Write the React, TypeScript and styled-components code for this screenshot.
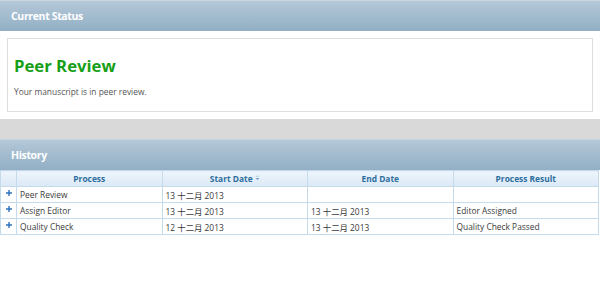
import React from "react";
import styled, { createGlobalStyle } from "styled-components";

const Global = createGlobalStyle`
  html, body { margin: 0; padding: 0; background: #fff; }
  body { font-family: "Open Sans", "Noto Sans CJK SC", sans-serif; }
`;

const Page = styled.div`
  width: 600px;
  display: flex;
  flex-direction: column;
`;

const SectionHeader = styled.div`
  height: 31px;
  box-sizing: border-box;
  border-top: 1px solid #c9d5df;
  background: linear-gradient(#b4c8d8, #92afc5);
  color: #fff;
  font-weight: 700;
  font-size: 10.5px;
  letter-spacing: -0.35px;
  display: flex;
  align-items: center;
  padding-left: 11px;
`;

const StatusBody = styled.div`
  padding: 7px;
  background: #fff;
`;

const StatusBox = styled.div`
  border: 1px solid #dedede;
  height: 74px;
  box-sizing: border-box;
  padding: 8px 6px;
`;

const StatusTitle = styled.div`
  color: #17a017;
  font-weight: 700;
  font-size: 16.7px;
  margin-top: 7px;
`;

const StatusText = styled.div`
  color: #555;
  font-size: 8.4px;
  margin-top: 9px;
`;

const Gap = styled.div`
  height: 20px;
  background: #d9d9d9;
`;

const Table = styled.table`
  border-collapse: collapse;
  width: 599px;
  font-size: 8.4px;
  table-layout: fixed;
`;

const Th = styled.th<{ $w?: number }>`
  ${(p) => (p.$w ? `width: ${p.$w}px;` : "")}
  height: 15px;
  padding: 0;
  border: 1px solid #c5dbec;
  background: linear-gradient(#eef5fc, #dbe8f5);
  color: #2e6e9e;
  font-weight: 700;
  font-size: 8.4px;
  text-align: center;
`;

const Td = styled.td`
  height: 15px;
  padding: 0 3px;
  border: 1px solid #c5dbec;
  color: #3a3a3a;
  white-space: nowrap;
  overflow: hidden;
  text-align: left;
`;

const IconTd = styled.td`
  height: 15px;
  padding: 0;
  border: 1px solid #c5dbec;
  text-align: center;
  vertical-align: top;
`;

const Plus = styled.svg`
  display: block;
  margin: 3px auto 0;
`;

const SortIcon = styled.svg`
  display: inline-block;
  margin-left: 2px;
  vertical-align: 1px;
`;

const rows = [
  ["Peer Review", "13 十二月 2013", "", ""],
  ["Assign Editor", "13 十二月 2013", "13 十二月 2013", "Editor Assigned"],
  ["Quality Check", "12 十二月 2013", "13 十二月 2013", "Quality Check Passed"],
];

export default function App() {
  return (
    <Page>
      <Global />
      <SectionHeader>Current Status</SectionHeader>
      <StatusBody>
        <StatusBox>
          <StatusTitle>Peer Review</StatusTitle>
          <StatusText>Your manuscript is in peer review.</StatusText>
        </StatusBox>
      </StatusBody>
      <Gap />
      <SectionHeader>History</SectionHeader>
      <Table>
        <thead>
          <tr>
            <Th $w={15}></Th>
            <Th>Process</Th>
            <Th>
              Start Date
              <SortIcon width="5" height="7" viewBox="0 0 5 7">
                <path d="M0.5 3 L2.5 1 L4.5 3 Z" fill="#c3d6e8" />
                <path d="M0.5 4 L2.5 6 L4.5 4 Z" fill="#6f9cc7" />
              </SortIcon>
            </Th>
            <Th>End Date</Th>
            <Th>Process Result</Th>
          </tr>
        </thead>
        <tbody>
          {rows.map((r) => (
            <tr key={r[0]}>
              <IconTd>
                <Plus width="6" height="6" viewBox="0 0 6 6">
                  <path d="M3 0 V6 M0 3 H6" stroke="#2e72c0" strokeWidth="1.4" />
                </Plus>
              </IconTd>
              {r.map((c, i) => (
                <Td key={i}>{c}</Td>
              ))}
            </tr>
          ))}
        </tbody>
      </Table>
    </Page>
  );
}
